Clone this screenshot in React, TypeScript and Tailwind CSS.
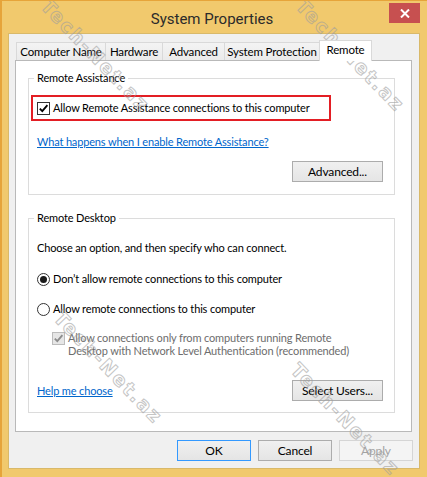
import type { ReactNode } from 'react';

const ui =
  "font-['Lato',sans-serif] text-[11px] tracking-[-0.15px] leading-[16px] text-black whitespace-nowrap";

function CheckBox({ disabled = false }: { disabled?: boolean }) {
  return (
    <span
      className={`flex h-[13px] w-[13px] shrink-0 items-center justify-center border ${
        disabled ? 'border-[#bcbcbc] bg-[#e6e6e6]' : 'border-[#333333] bg-white'
      }`}
    >
      <svg width="11" height="11" viewBox="0 0 11 11">
        <path
          d="M1.8 5.6 L4.3 8.2 L9.4 2.2"
          fill="none"
          stroke={disabled ? '#8c8c8c' : '#000'}
          strokeWidth="1.8"
        />
      </svg>
    </span>
  );
}

function Radio({ checked = false }: { checked?: boolean }) {
  return (
    <span className="flex h-[13px] w-[13px] shrink-0 items-center justify-center rounded-full border border-[#333333] bg-white">
      {checked && <span className="h-[7px] w-[7px] rounded-full bg-[#1a1a1a]" />}
    </span>
  );
}

function Btn({ children, kind = 'normal' }: { children: ReactNode; kind?: 'normal' | 'default' | 'disabled' }) {
  const styles = {
    normal: 'border-[#acacac] bg-gradient-to-b from-[#f0f0f0] to-[#e5e5e5] text-black',
    default: 'border-[#3399ff] bg-gradient-to-b from-[#f0f0f0] to-[#e5e5e5] text-black',
    disabled: 'border-[#d5d5d5] bg-[#f4f4f4] text-[#a3a3a3]',
  };
  return (
    <div className={`flex h-[21px] items-center justify-center border text-[12px] ${styles[kind]}`}>{children}</div>
  );
}

function Tab({ label, width, selected = false }: { label: string; width: number; selected?: boolean }) {
  if (selected) {
    return (
      <div
        className="relative z-10 -mb-px -ml-px flex h-[21px] items-start justify-center border border-b-0 border-[#d9d9d9] bg-white pt-[1px]"
        style={{ width }}
      >
        {label}
      </div>
    );
  }
  return (
    <div
      className="-ml-px flex h-[18px] items-center justify-center border border-b-0 border-[#d9d9d9] bg-gradient-to-b from-[#f3f3f3] to-[#ebebeb] first:ml-0"
      style={{ width }}
    >
      {label}
    </div>
  );
}

function Watermark({ x, y }: { x: number; y: number }) {
  return (
    <div
      className="pointer-events-none absolute origin-top-left rotate-[46deg] whitespace-nowrap font-['DejaVu_Sans',sans-serif] text-[19px] font-bold leading-none tracking-[2px] text-transparent opacity-60 [-webkit-text-stroke:1px_#9f9f9f]"
      style={{ left: x + 12, top: y - 8 }}
    >
      Tech-Net.az
    </div>
  );
}

export default function App() {
  return (
    <div className={`relative h-[477px] w-[427px] overflow-hidden border-t border-l-2 border-[#e6a43a] bg-[#f1c96d] ${ui}`}>
      {/* title bar */}
      <div className="grid h-[32px] grid-cols-[1fr_auto_1fr] pr-[7px]">
        <div />
        <div className="pt-[8px] pl-[2px] font-['Roboto',sans-serif] text-[15px] leading-[20px] tracking-normal text-[#2b2b2b]">
          System Properties
        </div>
        <div className="flex justify-end pt-[2px]">
          <div className="flex h-[20px] w-[31px] items-center justify-center bg-[#c75050]">
            <svg width="10" height="9" viewBox="0 0 10 9">
              <path d="M1 0.5 L9 8.5 M9 0.5 L1 8.5" stroke="#fff" strokeWidth="2" />
            </svg>
          </div>
        </div>
      </div>

      {/* client area */}
      <div className="ml-[6px] h-[436px] w-[412px] border border-[#d9b969] bg-[#f0f0f0] pt-[6px] pl-[6px]">
        {/* tabs */}
        <div className="flex h-[20px] items-end pl-[1px] text-[11.5px]">
          <Tab label="Computer Name" width={90} />
          <Tab label="Hardware" width={58} />
          <Tab label="Advanced" width={63} />
          <Tab label="System Protection" width={96} />
          <Tab label="Remote" width={53} selected />
        </div>

        {/* panel */}
        <div className="h-[372px] w-[397px] border border-[#b9b9b9] bg-white pt-[9px] pl-[12px]">
          <fieldset className="w-[367px] border border-[#dcdcdc] pb-[12px]">
            <legend className="ml-[5px] px-[3px] leading-[16px]">Remote Assistance</legend>
            <div className="mt-[9px] ml-[2px] flex h-[26px] w-[300px] items-center gap-[3px] border-2 border-[#e31e24] pl-[4px]">
              <CheckBox />
              <span>Allow Remote Assistance connections to this computer</span>
            </div>
            <div className="mt-[13px] ml-[8px] text-[#0066cc] underline">
              What happens when I enable Remote Assistance?
            </div>
            <div className="mt-[11px] flex justify-end pr-[11px]">
              <div className="w-[91px]">
                <Btn>Advanced...</Btn>
              </div>
            </div>
          </fieldset>

          <fieldset className="mt-[15px] w-[367px] border border-[#dcdcdc] pb-[11px]">
            <legend className="ml-[5px] px-[3px] leading-[16px]">Remote Desktop</legend>
            <div className="pl-[8px]">
              <div className="mt-[14px]">Choose an option, and then specify who can connect.</div>
              <div className="mt-[15px] flex items-center gap-[3px]">
                <Radio checked />
                <span>Don’t allow remote connections to this computer</span>
              </div>
              <div className="mt-[14px] flex items-center gap-[3px]">
                <Radio />
                <span>Allow remote connections to this computer</span>
              </div>
              <div className="mt-[14px] flex items-start gap-[3px] pl-[15px]">
                <div className="pt-[1px]">
                  <CheckBox disabled />
                </div>
                <span className="leading-[13px] text-[#6d6d6d]">
                  Allow connections only from computers running Remote
                  <br />
                  Desktop with Network Level Authentication (recommended)
                </span>
              </div>
              <div className="mt-[23px] flex items-center justify-between pr-[11px]">
                <span className="text-[#0066cc] underline">Help me choose</span>
                <div className="w-[91px]">
                  <Btn>Select Users...</Btn>
                </div>
              </div>
            </div>
          </fieldset>
        </div>

        {/* dialog buttons */}
        <div className="mt-[8px] flex justify-end gap-[7px] pr-[6px]">
          <div className="w-[74px]">
            <Btn kind="default">OK</Btn>
          </div>
          <div className="w-[74px]">
            <Btn>Cancel</Btn>
          </div>
          <div className="w-[74px]">
            <Btn kind="disabled">Apply</Btn>
          </div>
        </div>
      </div>

      <Watermark x={37} y={3} />
      <Watermark x={292} y={3} />
      <Watermark x={50} y={315} />
      <Watermark x={287} y={367} />
    </div>
  );
}
